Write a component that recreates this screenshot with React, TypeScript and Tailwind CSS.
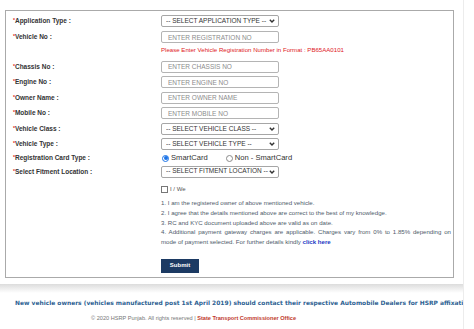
import React from "react"

const sans = { fontFamily: '"Liberation Sans", Arial, sans-serif' }

function Label({ text }: { text: string }) {
  return (
    <div className="w-[148px] shrink-0 whitespace-nowrap text-[6.5px] font-bold text-[#333]">
      <span className="relative top-[-1px] text-[5px] text-[#e02020]">*</span>
      {text}
    </div>
  )
}

function Select({ text }: { text: string }) {
  return (
    <div className="flex h-[12px] w-[118px] items-center rounded-[2px] border border-[#a6a6a6] bg-white pl-[4px] pr-[3px]">
      <span className="flex-1 overflow-hidden whitespace-nowrap text-[6.5px] leading-none text-[#333]">{text}</span>
      <svg width="6" height="4" viewBox="0 0 6 4" className="shrink-0">
        <path d="M0.8 0.7 L3 3 L5.2 0.7" stroke="#333" strokeWidth="1.4" fill="none" />
      </svg>
    </div>
  )
}

function TextBox({ placeholder }: { placeholder: string }) {
  return (
    <input
      type="text"
      placeholder={placeholder}
      className="h-[12px] w-[118px] rounded-[2px] border border-[#b4b4b4] bg-white px-[6px] text-[6.5px] leading-none text-[#333] placeholder:text-[#8c8c8c] outline-none"
    />
  )
}

function Radio({ checked, label }: { checked?: boolean; label: string }) {
  return (
    <div className="flex items-center gap-[2px]">
      {checked ? (
        <span className="flex h-[7px] w-[7px] items-center justify-center rounded-full border border-[#1a73e8] bg-white">
          <span className="h-[4px] w-[4px] rounded-full bg-[#1a73e8]" />
        </span>
      ) : (
        <span className="h-[7px] w-[7px] rounded-full border border-[#8a8a8a] bg-white" />
      )}
      <span className="text-[7.6px] leading-none text-[#333]">{label}</span>
    </div>
  )
}

export default function App() {
  return (
    <div className="min-h-[329px] w-[474px] bg-white" style={sans}>
      <div className="w-[464px] min-h-[329px] border-r border-[#ececec] pt-[10px]">
        {/* form panel */}
        <div className="ml-[5px] h-[268px] w-[449px] border border-[#aaaaaa] pl-[7px] pt-[2px]">
          <div className="flex h-[16px] items-center">
            <Label text="Application Type :" />
            <Select text="-- SELECT APPLICATION TYPE --" />
          </div>
          <div className="flex h-[16px] items-center">
            <Label text="Vehicle No :" />
            <TextBox placeholder="ENTER REGISTRATION NO" />
          </div>
          <div className="flex h-[14px]">
            <div className="w-[148px] shrink-0" />
            <div className="text-[6.1px] leading-[10px] text-[#e0201c]">
              Please Enter Vehicle Registration Number in Format : PB65AA0101
            </div>
          </div>
          <div className="flex h-[15.5px] items-center">
            <Label text="Chassis No :" />
            <TextBox placeholder="ENTER CHASSIS NO" />
          </div>
          <div className="flex h-[15.5px] items-center">
            <Label text="Engine No :" />
            <TextBox placeholder="ENTER ENGINE NO" />
          </div>
          <div className="flex h-[15.5px] items-center">
            <Label text="Owner Name :" />
            <TextBox placeholder="ENTER OWNER NAME" />
          </div>
          <div className="flex h-[15.5px] items-center">
            <Label text="Mobile No :" />
            <TextBox placeholder="ENTER MOBILE NO" />
          </div>
          <div className="flex h-[15.5px] items-center">
            <Label text="Vehicle Class :" />
            <Select text="-- SELECT VEHICLE CLASS --" />
          </div>
          <div className="flex h-[15.5px] items-center">
            <Label text="Vehicle Type :" />
            <Select text="-- SELECT VEHICLE TYPE --" />
          </div>
          <div className="flex h-[12px] items-center">
            <Label text="Registration Card Type :" />
            <div className="flex items-center gap-[18px] pl-[1px]">
              <Radio checked label="SmartCard" />
              <Radio label="Non - SmartCard" />
            </div>
          </div>
          <div className="flex h-[15px] items-center">
            <Label text="Select Fitment Location :" />
            <Select text="-- SELECT FITMENT LOCATION --" />
          </div>

          <div className="ml-[148px] mt-[4px] flex h-[12px] items-center gap-[2px]">
            <span className="h-[7px] w-[7px] border border-[#777] bg-white" />
            <span className="text-[6px] text-[#555]">I / We</span>
          </div>

          <div className="ml-[148px] mt-[3px] w-[290px] text-[6.1px] leading-[9.8px] text-[#4f5b6b]">
            <div>1. I am the registered owner of above mentioned vehicle.</div>
            <div>2. I agree that the details mentioned above are correct to the best of my knowledge.</div>
            <div>3. RC and KYC document uploaded above are valid as on date.</div>
            <div className="text-justify [text-align-last:justify]">
              4. Additional payment gateway charges are applicable. Charges vary from 0% to 1.85% depending on
            </div>
            <div>
              mode of payment selected. For further details kindly{" "}
              <span className="font-bold text-[#2339c4]">click here</span>
            </div>
          </div>

          <button className="ml-[148px] mt-[12px] flex h-[14px] w-[38px] items-center justify-center bg-[#1c3a63] text-[6px] font-bold text-white">
            Submit
          </button>
        </div>

        {/* shadow strip */}
        <div className="mt-[6px] h-[9px] bg-gradient-to-b from-[#dcdcdc] to-white" />

        <div
          className="mt-[5px] overflow-hidden whitespace-nowrap pl-[15px] text-[5.95px] font-bold leading-[10px] text-[#2d5f92]"
          style={{ fontFamily: '"DejaVu Sans", Verdana, sans-serif' }}
        >
          New vehicle owners (vehicles manufactured post 1st April 2019) should contact their respective Automobile Dealers for HSRP affixation
        </div>

        <div className="mt-[6px] whitespace-nowrap pl-[91px] text-[5.6px] leading-[8px] text-[#777]">
          © 2020 HSRP Punjab. All rights reserved |{" "}
          <span className="font-bold text-[#c0392b]">State Transport Commissioner Office</span>
        </div>
      </div>
    </div>
  )
}
